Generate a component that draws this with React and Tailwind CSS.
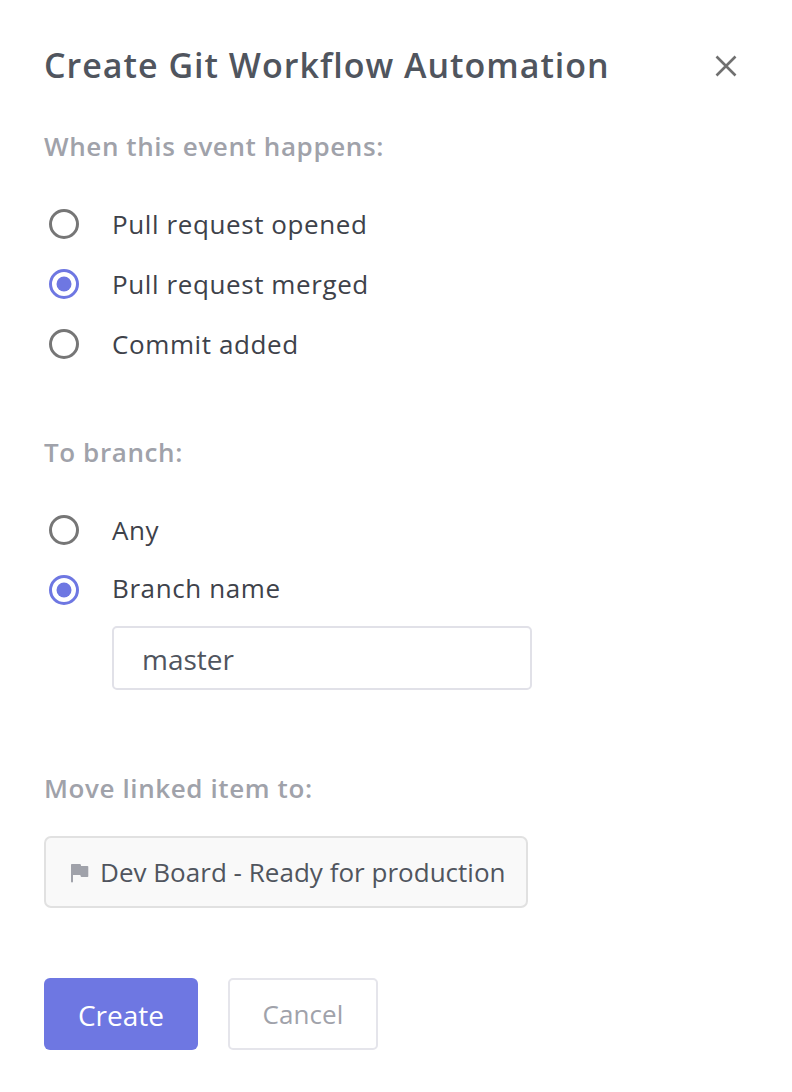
function Radio({ checked, label, className }) {
  return (
    <label className="flex h-[60px] items-center pl-[5px]">
      <svg width="30" height="30" viewBox="0 0 30 30" className="shrink-0" aria-hidden="true">
        <circle cx="15" cy="15" r="13.5" fill="white" stroke={checked ? "#6e77e2" : "#767676"} strokeWidth="3" />
        {checked && <circle cx="15" cy="15" r="7.5" fill="#6e77e2" />}
      </svg>
      <span className={`ml-[33px] whitespace-nowrap text-[26px] leading-[36px] tracking-[0.6px] text-[#3e424a] ${className || ""}`}>{label}</span>
    </label>
  );
}

function Heading({ children }) {
  return <h2 className="whitespace-nowrap text-[26px] font-semibold leading-[36px] tracking-[0.6px] text-[#a0a2aa]">{children}</h2>;
}

export default function App() {
  return (
    <main className="h-[1092px] w-[792px] overflow-hidden bg-white px-[44px] pt-[42px] font-['Open_Sans',sans-serif]">
      <header className="flex h-[48px] items-center justify-between pr-[11px]">
        <h1 className="whitespace-nowrap pb-[2px] text-[34px] font-semibold leading-[48px] tracking-[1px] text-[#50555e]">Create Git Workflow Automation</h1>
        <button aria-label="Close">
          <svg width="22" height="22" viewBox="0 0 22 22" fill="none" stroke="#707070" strokeWidth="2.6"><path d="M1.5 1.5 20.5 20.5M20.5 1.5 1.5 20.5" /></svg>
        </button>
      </header>
      <section className="mt-[38px]">
        <Heading>When this event happens:</Heading>
        <div className="mt-[30px]">
          <Radio label="Pull request opened" />
          <Radio label="Pull request merged" checked />
          <Radio label="Commit added" />
        </div>
      </section>
      <section className="mt-[60px]">
        <Heading>To branch:</Heading>
        <div className="mt-[30px]">
          <Radio label="Any" />
          <Radio label="Branch name" checked className="pb-[4px]" />
        </div>
        <div className="ml-[68px] mt-[6px] flex h-[64px] w-[420px] items-center rounded-[5px] border-2 border-[#e1e1e8] pl-[28px] pt-px text-[28px] text-[#50555e]">master</div>
      </section>
      <section className="mt-[80px]">
        <Heading>Move linked item to:</Heading>
        <button className="mt-[30px] flex h-[72px] w-[484px] items-center rounded-[7px] border-2 border-[#e1e1e1] bg-[#f9f9f9] pl-[24px]">
          <svg width="20" height="22" viewBox="0 0 20 22" fill="#a0a2aa"><path d="M1.8 3H10a.8.8 0 0 1 .8.7l.3 1.3h6.4a.8.8 0 0 1 .8.8v9.400a.8.8 0 0 1-.8.8H11.500a.8.8 0 0 1-.8-.7L10.300 14H3v6.600a1 1 0 0 1-2 0V3.800a.8.8 0 0 1 .8-.8z" /></svg>
          <span className="ml-[10px] whitespace-nowrap text-[26px] tracking-[0.02px] text-[#50555e]">Dev Board - Ready for production</span>
        </button>
      </section>
      <footer className="mt-[70px] flex gap-[30px]">
        <button className="h-[72px] w-[154px] rounded-[6px] bg-[#6e77e2] pt-px text-[28px] text-white">Create</button>
        <button className="h-[72px] w-[150px] rounded-[5px] border-2 border-[#e5e5eb] text-[26px] tracking-[0.1px] text-[#a0a2aa]">Cancel</button>
      </footer>
    </main>
  );
}
